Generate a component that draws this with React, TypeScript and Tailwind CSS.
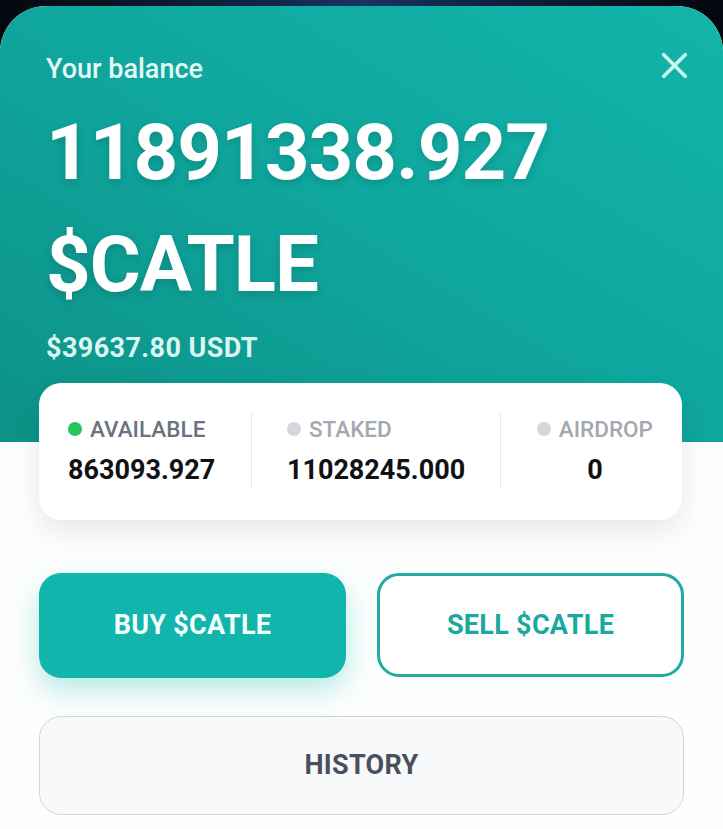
import { X } from "lucide-react";

const stats = [
  { label: "AVAILABLE", value: "863093.927", active: true },
  { label: "STAKED", value: "11028245.000", active: false },
  { label: "AIRDROP", value: "0", active: false },
];

export default function App() {
  return (
    <div className="min-h-[829px] w-full bg-gradient-to-r from-[#04070d] via-[#153462] to-[#04070d] pt-[6px] font-['Roboto',sans-serif]">
      <div className="min-h-[823px] overflow-hidden rounded-t-[46px] bg-[#fdfefe]">
        {/* header */}
        <div className="relative bg-gradient-to-tr from-[#0d9187] via-[#0fa69d] to-[#13b4ab] pl-[46px] pr-[30px] pt-[48px] pb-[79px]">
          <button
            type="button"
            className="absolute right-[27px] top-[38px] text-[#c9f6ef]"
          >
            <X size={43} strokeWidth={2.1} />
          </button>
          <p className="text-[27px] font-medium leading-[30px] text-[#e3f8f4]">
            Your balance
          </p>
          <h1 className="mt-[13px] text-[78px] font-bold leading-[112px] tracking-[-1px] text-white [text-shadow:0_3px_8px_rgba(0,0,0,0.15)]">
            11891338.927
            <br />
            $CATLE
          </h1>
          <p className="mt-[12px] text-[27px] font-bold leading-[30px] tracking-[0.4px] text-[#daf6f1]">
            $39637.80 USDT
          </p>
        </div>

        {/* body */}
        <div className="px-[39px]">
          <div className="relative -mt-[59px] mr-[2px] flex justify-between rounded-[22px] bg-white px-[29px] pt-[33px] pb-[35px] shadow-[0_12px_30px_rgba(0,0,0,0.09)]">
            {stats.map((stat, i) => (
              <div key={stat.label} className="contents">
                {i > 0 && <div className="-my-[3px] w-px bg-[#e5e7eb]" />}
                <div
                  className={`flex flex-col ${
                    i === stats.length - 1 ? "items-center" : "items-start"
                  }`}
                >
                  <div className="flex items-center gap-[8px]">
                    <span
                      className={`h-[14px] w-[14px] rounded-full ${
                        stat.active ? "bg-[#22c55e]" : "bg-[#d4d6dc]"
                      }`}
                    />
                    <span
                      className={`text-[22.5px] font-medium leading-[26px] ${
                        stat.active ? "text-[#6b7280]" : "text-[#a3a8b1]"
                      }`}
                    >
                      {stat.label}
                    </span>
                  </div>
                  <span className="mt-[13px] text-[27px] font-bold leading-[30px] text-[#0f1115]">
                    {stat.value}
                  </span>
                </div>
              </div>
            ))}
          </div>

          <div className="mt-[53px] grid grid-cols-2 gap-[31px]">
            <button
              type="button"
              className="flex h-[105px] items-center justify-center rounded-[22px] bg-[#12b5ac] text-[27px] font-bold tracking-[0.3px] text-[#f2fffd] shadow-[0_12px_28px_rgba(18,181,172,0.3)]"
            >
              BUY $CATLE
            </button>
            <button
              type="button"
              className="flex h-[104px] items-center justify-center rounded-[22px] border-[3px] border-[#22aaa2] bg-white text-[27px] font-bold tracking-[0.3px] text-[#19a99f]"
            >
              SELL $CATLE
            </button>
          </div>

          <button
            type="button"
            className="mt-[38px] flex h-[99px] w-full items-center justify-center rounded-[22px] border border-[#d3d6db] bg-[#f8f9fb] text-[27px] font-bold tracking-[0.3px] text-[#4a4f5c]"
          >
            HISTORY
          </button>
        </div>
      </div>
    </div>
  );
}
